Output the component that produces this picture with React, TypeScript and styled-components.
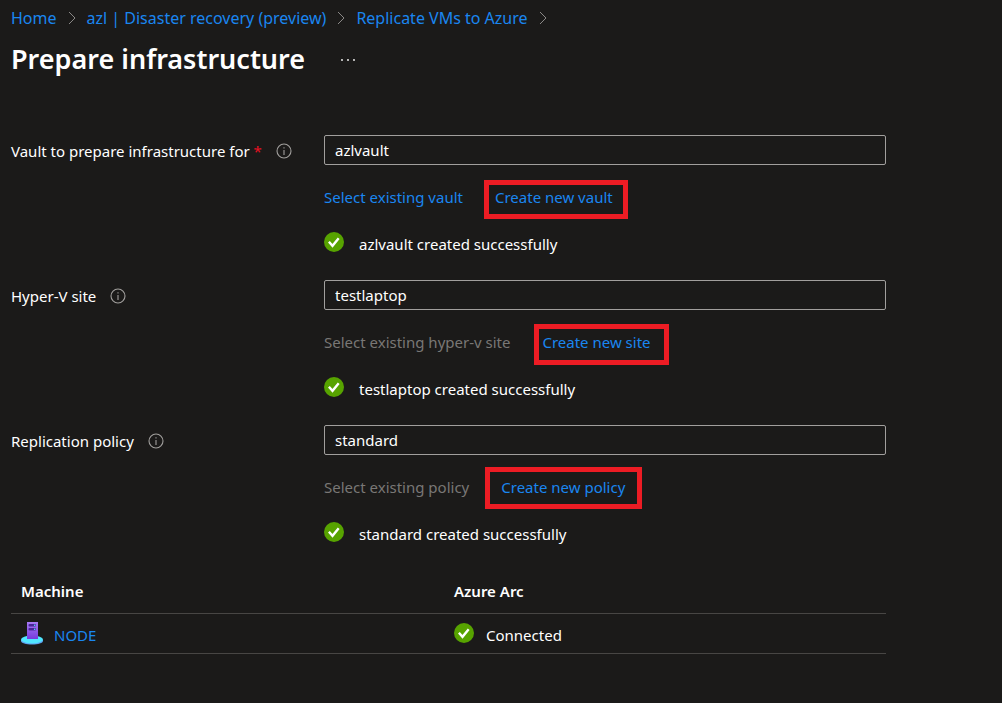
import React from "react";
import styled, { createGlobalStyle } from "styled-components";

const GlobalStyle = createGlobalStyle`
  * { box-sizing: border-box; }
  body {
    margin: 0;
    background: #1b1a19;
    color: #ffffff;
    font-family: "Noto Sans", "Open Sans", sans-serif;
    font-size: 15px;
    line-height: 22px;
  }
`;

const Page = styled.main`
  padding: 7px 116px 32px 11px;
`;

const Breadcrumb = styled.nav`
  display: flex;
  align-items: center;
  gap: 10px;
  font-size: 16px;
  white-space: nowrap;
`;

const Link = styled.a`
  color: #1a86f0;
  text-decoration: none;
`;

const TitleBar = styled.header`
  display: flex;
  align-items: center;
  gap: 35px;
  height: 60px;
`;

const Title = styled.h1`
  margin: 0;
  font-size: 27px;
  line-height: 36px;
  font-weight: 600;
  white-space: nowrap;
`;

const MoreButton = styled.button`
  display: flex;
  padding: 2px 0 0;
  border: 0;
  background: none;
  color: #ffffff;
`;

const Form = styled.form`
  display: flex;
  flex-direction: column;
  gap: 26px;
  padding-top: 46px;
`;

const Field = styled.div`
  display: grid;
  grid-template-columns: 313px minmax(0, 1fr);
  align-items: start;
`;

const LabelCell = styled.div`
  display: flex;
  align-items: center;
  gap: 14px;
  height: 32px;
  white-space: nowrap;
`;

const Required = styled.span`
  color: #e81123;
`;

const TextBox = styled.input`
  display: block;
  width: 100%;
  height: 30px;
  padding: 0 10px;
  border: 1px solid #a19f9d;
  border-radius: 2px;
  background: transparent;
  color: inherit;
  font: inherit;
  outline: none;
`;

const Actions = styled.div`
  display: flex;
  gap: 32px;
  margin-top: 21px;
`;

const ActionButton = styled.button`
  padding: 0;
  border: 0;
  background: none;
  color: #1a86f0;
  font: inherit;
  white-space: nowrap;
  &:disabled {
    color: #797775;
  }
`;

const Callout = styled.span<{ $inset: string }>`
  position: relative;
  display: flex;
  &::after {
    content: "";
    position: absolute;
    inset: ${(p) => p.$inset};
    border: 5px solid #ed1c24;
    pointer-events: none;
  }
`;

const Status = styled.div<{ $gap: number }>`
  display: flex;
  align-items: flex-start;
  gap: ${(p) => p.$gap}px;
`;

const StatusLine = styled(Status)`
  margin-top: 24px;
`;

const StatusText = styled.span`
  padding-top: 2px;
  line-height: 20px;
`;

const Table = styled.table`
  width: 100%;
  margin-top: 25px;
  border-collapse: collapse;
  table-layout: fixed;
`;

const Th = styled.th`
  height: 44px;
  padding: 0 10px;
  border-bottom: 1px solid #484644;
  font-weight: 600;
  text-align: left;
  &:first-child {
    width: 433px;
  }
`;

const Td = styled.td`
  height: 40px;
  padding: 2px 10px 0;
  border-bottom: 1px solid #484644;
`;

const Node = styled.div`
  display: flex;
  align-items: flex-start;
  gap: 11px;
`;

const NodeLink = styled(Link)`
  padding-top: 2px;
`;

const Chevron = () => (
  <svg width="10" height="14" viewBox="0 0 10 14" fill="none" stroke="#8a8886" aria-hidden="true">
    <path d="M2 1l6 6-6 6" />
  </svg>
);

const InfoIcon = () => (
  <svg width="16" height="16" viewBox="0 0 16 16" fill="none" stroke="#a19f9d" aria-hidden="true">
    <circle cx="8" cy="8" r="7" strokeWidth="1.1" />
    <path d="M8 7v5M8 4.2v1.3" strokeWidth="1.1" />
  </svg>
);

const CheckIcon = () => (
  <svg width="20" height="20" viewBox="0 0 20 20" aria-hidden="true">
    <circle cx="10" cy="10" r="10" fill="#57a300" />
    <path d="M4.9 9.8l3.6 4 6.2-7.5" fill="none" stroke="#fff" strokeWidth="2.4" />
  </svg>
);

const ServerIcon = () => (
  <svg width="22" height="23" viewBox="0 0 22 23" aria-hidden="true">
    <defs>
      <linearGradient id="tower" x1="0" y1="0" x2="0" y2="1">
        <stop offset="0" stopColor="#a67af4" />
        <stop offset="1" stopColor="#773adc" />
      </linearGradient>
    </defs>
    <path d="M0 18v1c0 2 5 3.500 11 3.500s11-1.500 11-3.500v-1z" fill="#5ea0ef" />
    <ellipse cx="11" cy="17.500" rx="11" ry="4" fill="#50e6ff" />
    <path d="M6 0h11v17H6z" fill="url(#tower)" />
    <rect x="7.500" y="2" width="7.500" height="2.500" rx="1" fill="#4a2596" />
    <rect x="7.500" y="6" width="7.500" height="2.500" rx="1" fill="#4a2596" />
    <circle cx="13.700" cy="3.300" r=".8" fill="#50e6ff" />
    <circle cx="13.700" cy="7.300" r=".8" fill="#50e6ff" />
  </svg>
);

const fields = [
  {
    id: "vault",
    label: "Vault to prepare infrastructure for",
    required: true,
    value: "azlvault",
    select: "Select existing vault",
    create: "Create new vault",
    selectDisabled: false,
    inset: "-6px -15px -11px -11px",
  },
  {
    id: "site",
    label: "Hyper-V site",
    required: false,
    value: "testlaptop",
    select: "Select existing hyper-v site",
    create: "Create new site",
    selectDisabled: true,
    inset: "-7px -18px -12px -8px",
  },
  {
    id: "policy",
    label: "Replication policy",
    required: false,
    value: "standard",
    select: "Select existing policy",
    create: "Create new policy",
    selectDisabled: true,
    inset: "-9px -17px -11px -16px",
  },
];

export default function App() {
  return (
    <>
      <GlobalStyle />
      <Page>
        <Breadcrumb aria-label="Breadcrumb">
          <Link href="#home">Home</Link>
          <Chevron />
          <Link href="#recovery">azl | Disaster recovery (preview)</Link>
          <Chevron />
          <Link href="#replicate">Replicate VMs to Azure</Link>
          <Chevron />
        </Breadcrumb>
        <TitleBar>
          <Title>Prepare infrastructure</Title>
          <MoreButton aria-label="More">
            <svg width="16" height="4" viewBox="0 0 16 4" fill="currentColor">
              <circle cx="2" cy="2" r="0.9" />
              <circle cx="8" cy="2" r="0.9" />
              <circle cx="14" cy="2" r="0.9" />
            </svg>
          </MoreButton>
        </TitleBar>
        <Form>
          {fields.map((f) => (
            <Field key={f.id}>
              <LabelCell>
                <label htmlFor={f.id}>
                  {f.label}
                  {f.required && <Required> *</Required>}
                </label>
                <InfoIcon />
              </LabelCell>
              <div>
                <TextBox id={f.id} type="text" defaultValue={f.value} />
                <Actions>
                  <ActionButton type="button" disabled={f.selectDisabled}>{f.select}</ActionButton>
                  <Callout $inset={f.inset}>
                    <ActionButton type="button">{f.create}</ActionButton>
                  </Callout>
                </Actions>
                <StatusLine $gap={15}>
                  <CheckIcon />
                  <StatusText>{f.value} created successfully</StatusText>
                </StatusLine>
              </div>
            </Field>
          ))}
        </Form>
        <Table>
          <thead>
            <tr>
              <Th>Machine</Th>
              <Th>Azure Arc</Th>
            </tr>
          </thead>
          <tbody>
            <tr>
              <Td>
                <Node>
                  <ServerIcon />
                  <NodeLink href="#node">NODE</NodeLink>
                </Node>
              </Td>
              <Td>
                <Status $gap={12}>
                  <CheckIcon />
                  <StatusText>Connected</StatusText>
                </Status>
              </Td>
            </tr>
          </tbody>
        </Table>
      </Page>
    </>
  );
}
